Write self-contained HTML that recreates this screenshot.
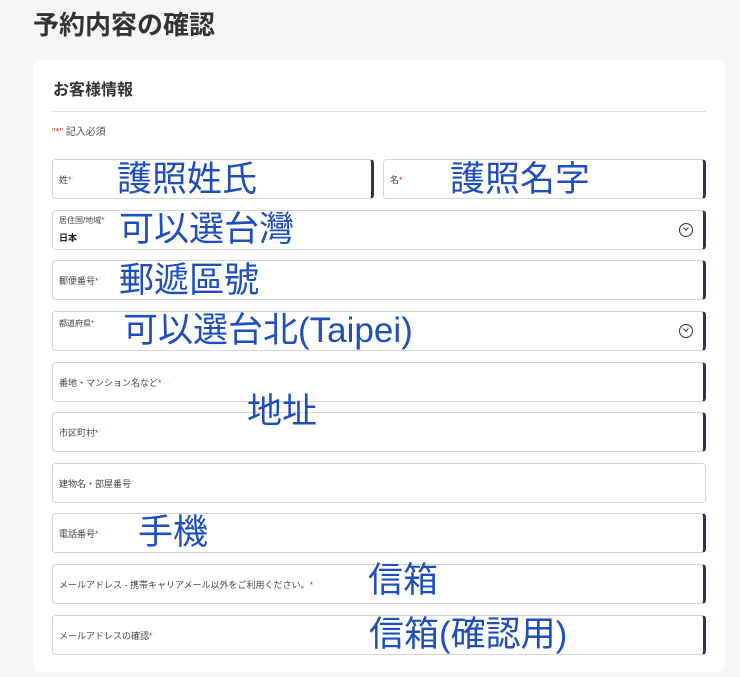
<!DOCTYPE html>
<html><head><meta charset="utf-8"><style>
body{margin:0;width:740px;height:677px;background:#f6f6f7;position:relative;overflow:hidden;font-family:"Liberation Sans","Noto Sans CJK JP",sans-serif;}
.t{position:absolute;left:33px;top:5px;font-size:26px;font-weight:bold;color:#333;}
.card{position:absolute;left:33px;top:60px;width:692px;height:612px;background:#fff;border-radius:8px;}
.h{position:absolute;left:53px;top:76px;font-size:16px;font-weight:bold;color:#333;}
.hr{position:absolute;left:52px;top:111px;width:654px;height:1px;background:#ddd;}
.req{position:absolute;left:52px;top:123px;font-size:10px;color:#555;}
.f{position:absolute;height:40px;border:1px solid #d6d6d9;border-radius:4px;background:#fff;box-sizing:border-box;}
.f.d{border-right:3px solid #2a3352;}
.l{position:absolute;left:6px;top:13px;font-size:9px;color:#444;white-space:nowrap;}
.s{color:#d33;}
.a{position:absolute;font-size:35px;color:#1f4fbf;white-space:nowrap;line-height:1;}
.c{position:absolute;right:10px;top:12px;width:14px;height:14px;border:1.3px solid #333;border-radius:50%;box-sizing:border-box;}
.c:after{content:"";position:absolute;left:3.5px;top:2px;width:3px;height:3px;border-right:1.3px solid #333;border-bottom:1.3px solid #333;transform:rotate(45deg);}
</style></head><body>
<div class="t">予約内容の確認</div>
<div class="card"></div>
<div class="h">お客様情報</div>
<div class="hr"></div>
<div class="req"><span class="s">"*"</span> 記入必須</div>

<div class="f d" style="left:52px;top:159px;width:322px"><div class="l">姓<span class="s">*</span></div></div>
<div class="f d" style="left:383px;top:159px;width:323px"><div class="l">名<span class="s">*</span></div></div>
<div class="f d" style="left:52px;top:210px;width:654px"><div class="l" style="top:4px;font-size:8px">居住国/地域<span class="s">*</span></div><div class="l" style="top:20px;font-weight:bold;color:#222">日本</div><div class="c"></div></div>
<div class="f d" style="left:52px;top:260px;width:654px"><div class="l">郵便番号<span class="s">*</span></div></div>
<div class="f d" style="left:52px;top:311px;width:654px"><div class="l" style="top:6px;font-size:8px">都道府県<span class="s">*</span></div><div class="c"></div></div>
<div class="f d" style="left:52px;top:362px;width:654px"><div class="l">番地・マンション名など<span class="s">*</span></div></div>
<div class="f d" style="left:52px;top:412px;width:654px"><div class="l">市区町村<span class="s">*</span></div></div>
<div class="f" style="left:52px;top:463px;width:654px"><div class="l">建物名・部屋番号</div></div>
<div class="f d" style="left:52px;top:513px;width:654px"><div class="l">電話番号<span class="s">*</span></div></div>
<div class="f d" style="left:52px;top:564px;width:654px"><div class="l">メールアドレス - 携帯キャリアメール以外をご利用ください。<span class="s">*</span></div></div>
<div class="f d" style="left:52px;top:615px;width:654px"><div class="l">メールアドレスの確認<span class="s">*</span></div></div>

<div class="a" style="left:117px;top:162px">護照姓氏</div>
<div class="a" style="left:450px;top:162px">護照名字</div>
<div class="a" style="left:119px;top:212px">可以選台灣</div>
<div class="a" style="left:119px;top:263px">郵遞區號</div>
<div class="a" style="left:123px;top:313px">可以選台北(Taipei)</div>
<div class="a" style="left:247px;top:394px">地址</div>
<div class="a" style="left:138px;top:515px">手機</div>
<div class="a" style="left:368px;top:563px">信箱</div>
<div class="a" style="left:369px;top:617px">信箱(確認用)</div>
</body></html>
